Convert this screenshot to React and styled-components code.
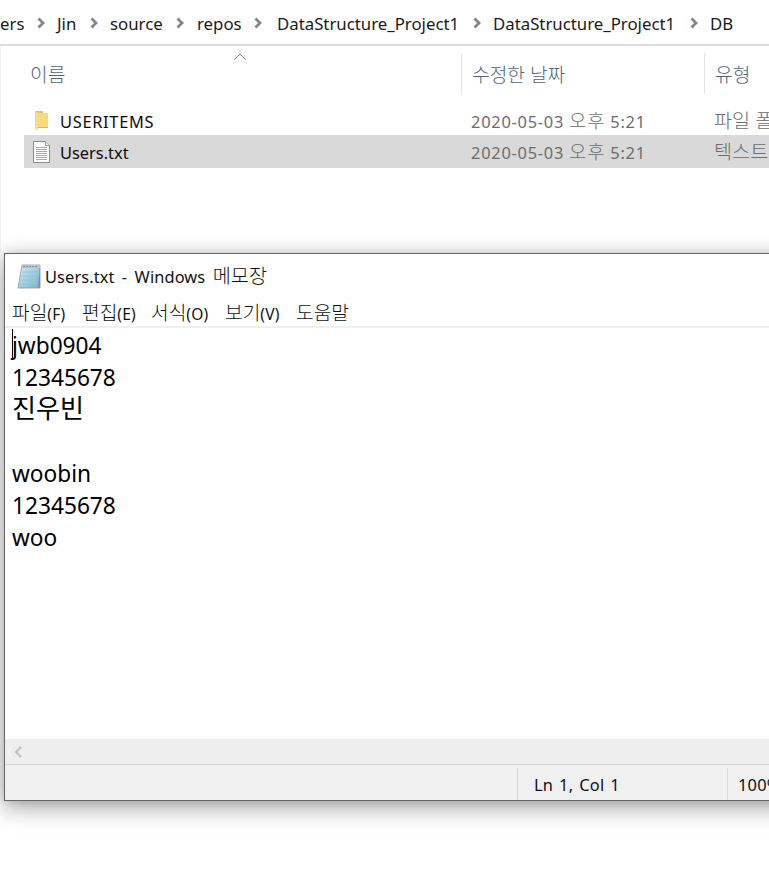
import React from "react";
import styled, { createGlobalStyle } from "styled-components";

const Global = createGlobalStyle`
  html, body { margin: 0; padding: 0; background: #fff; }
  body { font-family: "Noto Sans", "Noto Sans CJK KR", sans-serif; }
`;
const Stage = styled.div`
  width: 769px; height: 883px; overflow: hidden; background: #fff;
  display: flex; flex-direction: column;
`;
const K = styled.span`
  font-size: ${p => p.$s || 1.2}em; line-height: 1; font-weight: ${p => p.$wt || 300};
`;
const Crumbs = styled.nav`
  height: 46px; flex: none; box-sizing: border-box; border-bottom: 2px solid #dcdcdc;
  display: flex; align-items: center; font-size: 16.8px; color: #1a1a1a; padding-top: 2px; white-space: nowrap;
`;
const Crumb = styled.span`
  margin-left: ${p => p.$ml}px; display: inline-block; width: ${p => p.$w}px;
`;
const ChevronSvg = styled.svg`
  width: 8px; height: 12px; flex: none; margin-left: ${p => p.$ml}px;
`;
const Explorer = styled.section`
  height: 207px; flex: none; box-sizing: border-box; padding: 7px 0 0 0; border-left: 1px solid #f2f2f2;
`;
const HeaderRow = styled.div`
  height: 41px; display: grid; grid-template-columns: 461px 243px 1fr; position: relative;
`;
const HeaderCell = styled.div`
  box-sizing: border-box; font-size: 16px; color: #4f6379; display: flex; align-items: center;
  padding-left: ${p => p.$pl}px; padding-top: 2px; border-right: ${p => p.$sep ? "1px solid #e5e5e5" : "none"}; white-space: nowrap;
`;
const SortCaret = styled.svg`
  position: absolute; left: 232px; top: 0; width: 14px; height: 8px;
`;
const FileList = styled.div`
  margin-top: 11px; margin-left: 23px;
`;
const FileRow = styled.div`
  height: ${p => p.$h}px; display: grid; grid-template-columns: 438px 243px 1fr;
  background: ${p => p.$sel ? "#d9d9d9" : "transparent"}; align-items: center; font-size: 16.4px; white-space: nowrap; overflow: hidden;
  padding-top: ${p => p.$sel ? 1 : 2}px; box-sizing: border-box;
`;
const NameCell = styled.div`
  display: flex; align-items: center; color: #0c0c0c; padding-left: ${p => p.$pl}px;
  letter-spacing: ${p => p.$ls || 0}px;
`;
const IconSlot = styled.span`
  width: ${p => p.$w}px; flex: none; display: flex; align-items: center;
`;
const DateCell = styled.div`
  color: #6d6d6d; padding-left: 9px; letter-spacing: .75px;
`;
const TypeCell = styled.div`
  color: #6d6d6d; padding-left: 9px;
`;
const Notepad = styled.section`
  margin-left: 4px; width: 820px; height: 548px; flex: none; box-sizing: border-box;
  border: 1px solid #666; background: #fff; display: flex; flex-direction: column;
  box-shadow: 0 6px 22px rgba(0,0,0,.38), 0 0 8px rgba(0,0,0,.1);
`;
const TitleBar = styled.header`
  height: 44px; flex: none; display: flex; align-items: center; padding-left: 12px; font-size: 16.4px; color: #111;
`;
const TitleText = styled.span`
  margin-left: 4px; word-spacing: 3px; letter-spacing: .1px;
`;
const MenuBar = styled.div`
  height: 30px; flex: none; display: flex; align-items: center; padding-left: 7px; padding-top: 4px; font-size: 16px; color: #111;
  border-bottom: 2px solid #f0f0f0; box-sizing: border-box;
`;
const MenuItem = styled.span`
  width: ${p => p.$w}px; white-space: nowrap;
  small { font-size: 15.5px; letter-spacing: .2px; }
`;
const Editor = styled.div`
  flex: 1; position: relative; padding: 2px 0 0 7px; font-size: 22.7px; line-height: 32px; color: #000;
`;
const Line = styled.div`
  height: 32px; white-space: pre;
`;
const Caret = styled.span`
  position: absolute; left: 7px; top: 1px; width: 1px; height: 30px; background: #000;
`;
const HScroll = styled.div`
  height: 25px; flex: none; background: #eee; display: flex; align-items: center; padding-left: 8px;
`;
const StatusBar = styled.footer`
  height: 36px; flex: none; box-sizing: border-box; background: #f0f0f0; border-top: 1px solid #d6d6d6;
  display: grid; grid-template-columns: 512px 210px 1fr; font-size: 16.4px; color: #111; padding-top: 3px;
`;
const StatusCell = styled.div`
  box-sizing: border-box; padding-left: ${p => p.$pl}px; display: flex; align-items: center; white-space: nowrap;
  border-left: ${p => p.$sep ? "1px solid #d9d9d9" : "none"}; word-spacing: 1.5px; letter-spacing: .2px;
`;

const Chevron = ({ ml }) => (
  <ChevronSvg $ml={ml} viewBox="0 0 8 12">
    <path d="M1.5 1.5 L6 6 L1.5 10.5" fill="none" stroke="#858585" strokeWidth="2.8" />
  </ChevronSvg>
);
const FolderIcon = () => (
  <svg width="15" height="22" viewBox="0 0 15 22">
    <path d="M1 1 H9 V18 H1 Z" fill="#efc24f" />
    <path d="M4 3 H14 V17 H4 Z" fill="#fad97a" />
    <path d="M1 1 L4 3 V21 L1 18 Z" fill="#f8dc85" />
    <path d="M4 17 H14 V18 H4 Z" fill="#e3b850" />
  </svg>
);
const DocIcon = () => (
  <svg width="18" height="22" viewBox="0 0 18 22">
    <path d="M.5 .5 H12.5 L16.5 4.5 V21.5 H.5 Z" fill="#fff" stroke="#8a8a8a" />
    <path d="M12.5 .5 V4.5 H16.5" fill="#eee" stroke="#9a9a9a" />
    <path d="M3 6.5H14M3 8.5H14M3 10.5H14M3 12.5H14M3 14.5H14M3 16.5H14M3 18.5H14" stroke="#a8a8a8" />
  </svg>
);
const NotepadIcon = () => (
  <svg width="24" height="25" viewBox="0 0 24 25">
    <defs>
      <linearGradient id="np" x1="0" y1="0" x2="1" y2="1">
        <stop offset="0" stopColor="#d6eef5" />
        <stop offset="1" stopColor="#6fb3cc" />
      </linearGradient>
    </defs>
    <path d="M5 1 H23 V24 H1 Z" fill="url(#np)" stroke="#8c9aa0" strokeWidth=".8" />
    <path d="M23 2 V24 H21 Z" fill="#a08a68" />
    <path d="M5 1 H23 V4 H4.4 Z" fill="#b9c4c9" />
    <path d="M5 8H21M4 12H21M3.4 16H21M2.6 20H21" stroke="#8fc4d8" strokeWidth=".8" />
    <path d="M7 2V3M10 2V3M13 2V3M16 2V3M19 2V3" stroke="#666" />
  </svg>
);

export default function App() {
  return (
    <Stage>
      <Global />
      <Crumbs>
        <Crumb $w={24}>ers</Crumb>
        <Chevron ml={13} />
        <Crumb $ml={12} $w={26}>Jin</Crumb>
        <Chevron ml={7} />
        <Crumb $ml={12} $w={56}>source</Crumb>
        <Chevron ml={10} />
        <Crumb $ml={13} $w={46}>repos</Crumb>
        <Chevron ml={11} />
        <Crumb $ml={15} $w={182}>DataStructure_Project1</Crumb>
        <Chevron ml={14} />
        <Crumb $ml={12} $w={183}>DataStructure_Project1</Crumb>
        <Chevron ml={14} />
        <Crumb $ml={12} $w={24}>DB</Crumb>
      </Crumbs>
      <Explorer>
        <HeaderRow>
          <HeaderCell $pl={29} $sep><K>이름</K></HeaderCell>
          <HeaderCell $pl={10} $sep><K>수정한 날짜</K></HeaderCell>
          <HeaderCell $pl={10}><K>유형</K></HeaderCell>
          <SortCaret viewBox="0 0 14 8">
            <path d="M1 7 L7 1 L13 7" fill="none" stroke="#8c8c8c" />
          </SortCaret>
        </HeaderRow>
        <FileList>
          <FileRow $h={30}>
            <NameCell $pl={10} $ls={.7}><IconSlot $w={26}><FolderIcon /></IconSlot>USERITEMS</NameCell>
            <DateCell>2020-05-03 <K $s={1.15}>오후</K> 5:21</DateCell>
            <TypeCell><K>파일 폴더</K></TypeCell>
          </FileRow>
          <FileRow $h={33} $sel>
            <NameCell $pl={9}><IconSlot $w={27}><DocIcon /></IconSlot>Users.txt</NameCell>
            <DateCell>2020-05-03 <K $s={1.15}>오후</K> 5:21</DateCell>
            <TypeCell><K>텍스트 문서</K></TypeCell>
          </FileRow>
        </FileList>
      </Explorer>
      <Notepad>
        <TitleBar><NotepadIcon /><TitleText>Users.txt - Windows <K>메모장</K></TitleText></TitleBar>
        <MenuBar>
          <MenuItem $w={70}><K>파일</K><small>(F)</small></MenuItem>
          <MenuItem $w={69}><K>편집</K><small>(E)</small></MenuItem>
          <MenuItem $w={74}><K>서식</K><small>(O)</small></MenuItem>
          <MenuItem $w={71}><K>보기</K><small>(V)</small></MenuItem>
          <MenuItem $w={60}><K>도움말</K></MenuItem>
        </MenuBar>
        <Editor>
          <Caret />
          <Line>jwb0904</Line>
          <Line>12345678</Line>
          <Line><K $s={1.15} $wt={400}>진우빈</K></Line>
          <Line> </Line>
          <Line>woobin</Line>
          <Line>12345678</Line>
          <Line>woo</Line>
        </Editor>
        <HScroll>
          <svg width="10" height="12" viewBox="0 0 10 12">
            <path d="M8 1 L3 6 L8 11" fill="none" stroke="#c4c4c4" strokeWidth="2.4" />
          </svg>
        </HScroll>
        <StatusBar>
          <StatusCell />
          <StatusCell $sep $pl={16}>Ln 1, Col 1</StatusCell>
          <StatusCell $sep $pl={10}>100%</StatusCell>
        </StatusBar>
      </Notepad>
    </Stage>
  );
}
